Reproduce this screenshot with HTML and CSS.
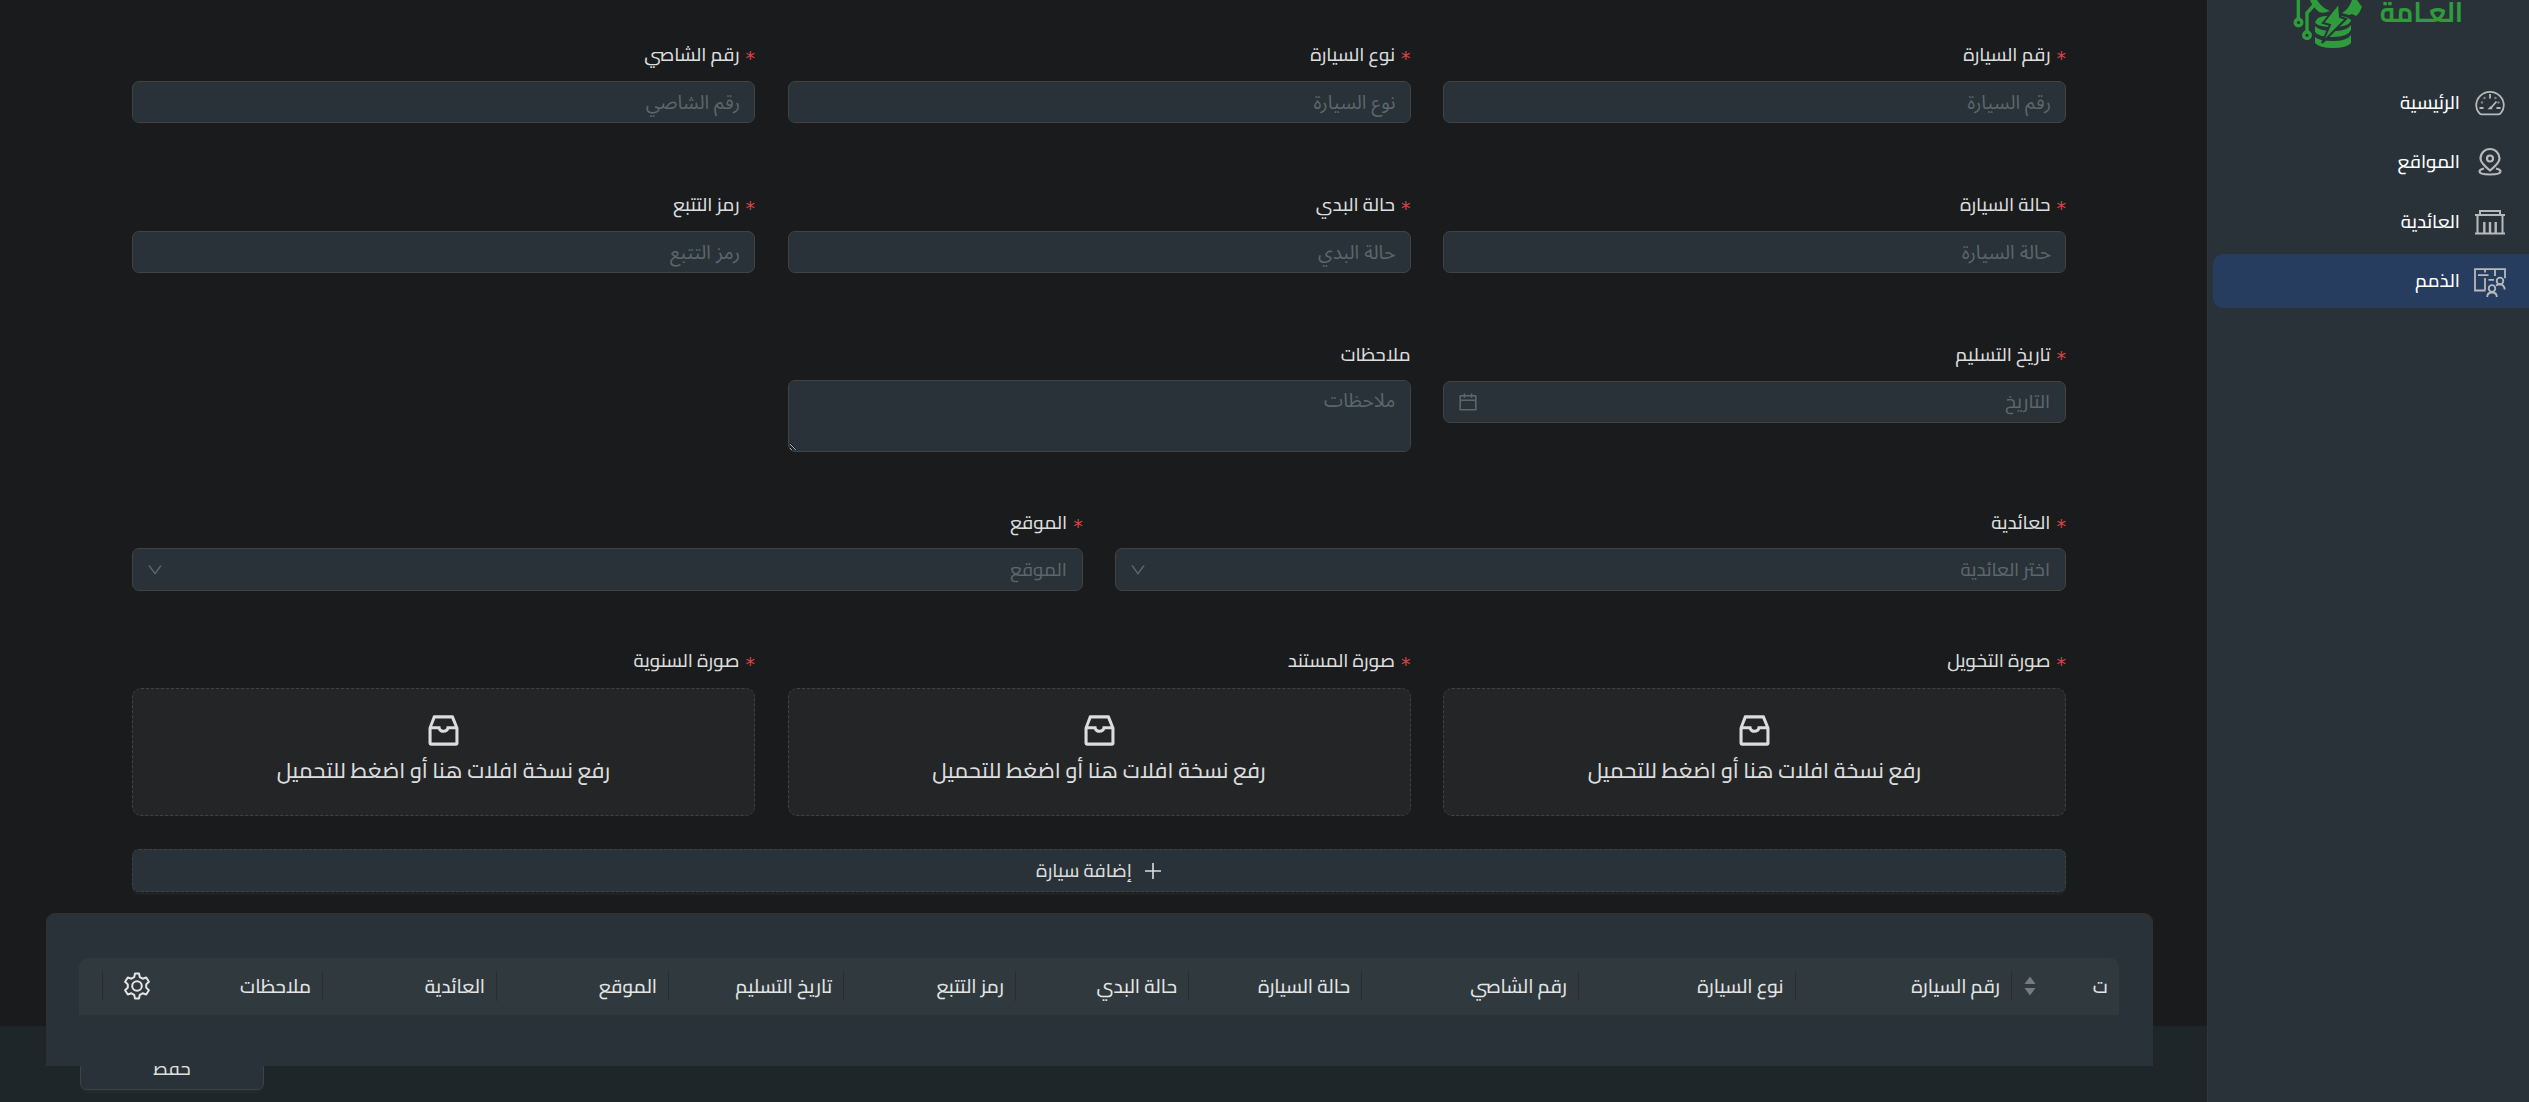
FILE: index.html
```html
<!DOCTYPE html>
<html lang="ar" dir="rtl">
<head>
<meta charset="utf-8">
<title>الذمم</title>
<link rel="stylesheet" href="styles.css">
</head>
<body>
<svg class="defs" aria-hidden="true">
  <symbol id="inbox" viewBox="0 0 1024 1024"><path d="M885.2 446.300l-.2-.8-112.200-285.100c-5-16.100-19.900-27.200-36.800-27.200H281.200c-17 0-32.100 11.300-36.900 27.600L139.400 443l-.3.7-.2.8c-1.300 4.900-1.700 9.900-1 14.800-.1 1.600-.2 3.200-.2 4.800V830a60.900 60.900 0 0 0 60.800 60.800h627.200c33.500 0 60.800-27.300 60.900-60.800V464.100c0-1.300 0-2.600-.1-3.700.4-4.900 0-9.600-1.300-14.100zm-295.800-43l-.3 15.700c-.8 44.900-31.800 75.100-77.100 75.100-22.100 0-41.100-7.100-54.800-20.600S436 441.200 435.600 419l-.3-15.700H229.500L309 210h399.200l81.700 193.300H589.400zm-375 76.800h157.300c24.300 57.100 76 90.800 140.400 90.800 33.700 0 65-9.400 90.300-27.200 22.200-15.600 39.500-37.400 50.700-63.600h156.500V814H214.400V480.100z"/></symbol>
  <symbol id="down" viewBox="0 0 1024 1024"><path d="M884 256h-75c-5.100 0-9.900 2.500-12.900 6.600L512 654.200 227.900 262.600c-3-4.100-7.800-6.600-12.900-6.600h-75c-6.500 0-10.300 7.400-6.500 12.700l352.600 486.100c12.800 17.600 39 17.600 51.700 0l352.600-486.100c3.900-5.300.1-12.700-6.400-12.700z"/></symbol>
</svg>

<aside class="sidebar">
  <div class="logo">
    <span class="logo-text">العـامة</span>
    <svg class="logo-mark" viewBox="0 0 70 48" width="70" height="48">
      <g fill="none" stroke="#2e9b3c" stroke-width="3.400">
        <path d="M5.300 0v18"/><path d="M14 31V13l8-9"/>
        <circle cx="5.500" cy="22.500" r="3.300"/><circle cx="14" cy="35.300" r="3.300"/>
      </g>
      <g fill="#2e9b3c">
        <path d="M17 0h7q5 8 13 11-7 3-11 1Q19 6 17 0z"/>
        <path d="M49 13q7-4 10-13h5l5 7-3 6-3 3-4-2-3 1z"/>
        <path d="M25 18q6-3 15-2 12-1 18 4v1q-3 6-18 6-16 0-18-5z"/>
        <path d="M22 26q4 5 18 5t18-6v5q-3 7-18 7-15 0-18-5z"/>
        <path d="M22 37q4 4 18 4t18-6v8q-4 5-18 5t-18-5z"/>
      </g>
      <path d="M46 3 30 23l7 2-8 18 24-24-6-2z" fill="#2e9b3c" stroke="#283238" stroke-width="2"/>
    </svg>
  </div>
  <nav class="menu">
    <a class="item"><svg viewBox="0 0 32 32" width="32" height="32"><g fill="none" stroke="currentColor" stroke-width="1.800"><path d="M7.500 27.300h17q1.600 0 2.500-1.500 2.800-3.300 2.800-7.200a13.800 13.800 0 0 0-27.600 0q0 3.900 2.800 7.200.9 1.500 2.500 1.500z"/><path d="M16 7v4.500M5.500 21h4M22.500 21h4"/><path d="M22.500 14.500 16.800 21"/></g><path d="M13.500 22.300l3.200-3 1.500 1.200v1.800z" fill="currentColor"/><g fill="currentColor" opacity=".6"><circle cx="8" cy="15.500" r="1.200"/><circle cx="10.500" cy="11" r="1.200"/><circle cx="21.500" cy="11" r="1.200"/><circle cx="24.500" cy="15.500" r="1.200"/></g></svg><span>الرئيسية</span></a>
    <a class="item"><svg viewBox="0 0 32 32" width="32" height="32"><g fill="none" stroke="currentColor" stroke-width="2.200"><path d="M16 24.500Q6.500 17 6.500 12.500a9.500 9.500 0 0 1 19 0q0 4.500-9.500 12z"/><circle cx="16" cy="12.500" r="3"/><path d="M10 22.500q-4.500 1-4.500 3 0 3 10.500 3t10.500-3q0-2-4.500-3"/></g></svg><span>المواقع</span></a>
    <a class="item"><svg viewBox="0 0 32 32" width="32" height="32"><g fill="none" stroke="currentColor" stroke-width="2"><path d="M1 9h30M1 27.500h30M3.500 9v18M28.500 9v18M6 8.500V5h20v3.500"/><path stroke-width="2.400" d="M10.300 16v11M16 16v11M21.700 16v11"/></g></svg><span>العائدية</span></a>
    <a class="item active"><svg viewBox="0 0 32 32" width="32" height="32"><g fill="none" stroke="currentColor" stroke-width="1.800"><path d="M11.500 25.500H1V4.200h30v9M4 10.200h10.500M11 4v3.500M11 13v12M21 4v7M14.500 14.800h5.500"/><circle cx="26" cy="16" r="3.300"/><path d="M22 20.500q4-2.500 7 0 1.500 1.500 1.700 4"/><circle cx="18" cy="23.500" r="3.300"/><path d="M13.200 32q0-4.500 4.800-4.500t4.800 4.500"/></g></svg><span>الذمم</span></a>
  </nav>
</aside>

<main class="page">
  <form class="form">
    <div class="row three">
      <label class="field"><span class="label req">رقم السيارة</span><input class="control" placeholder="رقم السيارة"></label>
      <label class="field"><span class="label req">نوع السيارة</span><input class="control" placeholder="نوع السيارة"></label>
      <label class="field"><span class="label req">رقم الشاصي</span><input class="control" placeholder="رقم الشاصي"></label>
    </div>
    <div class="row three">
      <label class="field"><span class="label req">حالة السيارة</span><input class="control" placeholder="حالة السيارة"></label>
      <label class="field"><span class="label req">حالة البدي</span><input class="control" placeholder="حالة البدي"></label>
      <label class="field"><span class="label req">رمز التتبع</span><input class="control" placeholder="رمز التتبع"></label>
    </div>
    <div class="row three notes-row">
      <div class="field"><span class="label req">تاريخ التسليم</span><div class="control picker"><span>التاريخ</span><svg viewBox="0 0 1024 1024" width="22" height="22"><path fill="currentColor" d="M880 184H712v-64c0-4.400-3.600-8-8-8h-56c-4.400 0-8 3.600-8 8v64H384v-64c0-4.400-3.600-8-8-8h-56c-4.400 0-8 3.600-8 8v64H144c-17.700 0-32 14.300-32 32v664c0 17.700 14.300 32 32 32h736c17.700 0 32-14.300 32-32V216c0-17.700-14.300-32-32-32zm-40 656H184V460h656v380zM184 392V256h128v48c0 4.400 3.600 8 8 8h56c4.400 0 8-3.600 8-8v-48h256v48c0 4.400 3.600 8 8 8h56c4.400 0 8-3.600 8-8v-48h128v136H184z"/></svg></div></div>
      <label class="field"><span class="label">ملاحظات</span><textarea class="control notes" placeholder="ملاحظات"></textarea></label>
    </div>
    <div class="row two">
      <div class="field"><span class="label req">العائدية</span><div class="control select"><span>اختر العائدية</span><svg width="18" height="18"><use href="#down"/></svg></div></div>
      <div class="field"><span class="label req">الموقع</span><div class="control select"><span>الموقع</span><svg width="18" height="18"><use href="#down"/></svg></div></div>
    </div>
    <div class="row three uploads">
      <div class="field"><span class="label req">صورة التخويل</span><div class="drop"><svg width="41" height="41"><use href="#inbox"/></svg><p>رفع نسخة افلات هنا أو اضغط للتحميل</p></div></div>
      <div class="field"><span class="label req">صورة المستند</span><div class="drop"><svg width="41" height="41"><use href="#inbox"/></svg><p>رفع نسخة افلات هنا أو اضغط للتحميل</p></div></div>
      <div class="field"><span class="label req">صورة السنوية</span><div class="drop"><svg width="41" height="41"><use href="#inbox"/></svg><p>رفع نسخة افلات هنا أو اضغط للتحميل</p></div></div>
    </div>
    <button type="button" class="add"><svg viewBox="0 0 18 18" width="18" height="18"><path d="M9 1v16M1 9h16" stroke="currentColor" stroke-width="1.600"/></svg><span>إضافة سيارة</span></button>
  </form>

  <section class="card">
    <div class="thead">
      <div class="th first"><span>ت</span><svg viewBox="0 0 12 20" width="12" height="20"><path fill="currentColor" d="M6 .5 11.500 8H.5zM6 19.500 11.500 12H.5z"/></svg></div>
      <div class="th">رقم السيارة</div>
      <div class="th">نوع السيارة</div>
      <div class="th">رقم الشاصي</div>
      <div class="th">حالة السيارة</div>
      <div class="th">حالة البدي</div>
      <div class="th">رمز التتبع</div>
      <div class="th">تاريخ التسليم</div>
      <div class="th">الموقع</div>
      <div class="th">العائدية</div>
      <div class="th">ملاحظات</div>
      <div class="th gear"><svg viewBox="0 0 28 28" width="28" height="28"><g fill="none" stroke="currentColor" stroke-width="2" stroke-linejoin="round"><path d="M12 1.500h4l.8 3.600 2.800 1.600 3.600-1.200 2.700 4.200-2.700 2.700v3.200l2.700 2.700-2.700 4.200-3.600-1.200-2.800 1.600-.8 3.600h-4l-.8-3.600-2.800-1.600-3.600 1.200-2.700-4.200 2.700-2.700v-3.200L2.100 9.700l2.700-4.200 3.600 1.200 2.800-1.600z"/><circle cx="14" cy="14" r="4.800"/></g></svg></div>
      <div class="th"></div>
    </div>
  </section>

  <footer class="footer"><button type="button" class="save">حفظ</button></footer>
</main>
</body>
</html>
```
FILE: styles.css
```css
* { box-sizing: border-box; }
body {
  margin: 0;
  height: 1102px;
  overflow: hidden;
  display: flex;
  background: #1a1b1d;
  color: #dcdddd;
  font: 500 18.700px/32px Cairo, "DejaVu Sans", sans-serif;
}
.defs { position: absolute; width: 0; height: 0; }
p { margin: 0; }
button { font: inherit; color: inherit; }

.sidebar {
  width: 322px;
  flex: none;
  background: #283238;
  border-left: 1px solid #303639;
}
.logo {
  height: 76px;
  padding-right: 66px;
  display: flex;
  align-items: flex-start;
  gap: 20px;
}
.logo-text {
  width: 80px;
  font-size: 28px;
  font-weight: 700;
  line-height: 24px;
  color: #2e9b3c;
  white-space: nowrap;
  transform: scaleX(.94);
  transform-origin: right;
}
.menu { display: flex; flex-direction: column; gap: 5.400px; }
.item {
  height: 54px;
  margin-left: 5px;
  padding-right: 23px;
  display: flex;
  align-items: center;
  gap: 14px;
  color: #fff;
}
.item svg { color: #b7b9ba; }
.item.active { background: #263d5f; border-radius: 10px 0 0 10px; }

.page { flex: 1; min-width: 0; display: flex; flex-direction: column; }
.form { padding: 39px 141px 0 132px; }
.row { display: grid; column-gap: 32.500px; align-items: start; margin-bottom: 66px; }
.three { grid-template-columns: repeat(3, 1fr); }
.two { grid-template-columns: repeat(2, 1fr); margin-bottom: 54px; }
.notes-row { margin-bottom: 55px; }
.field { display: flex; flex-direction: column; gap: 10px; }
.two .field { gap: 9px; }
.label { height: 32px; }
.req::before {
  content: "*";
  display: inline-block;
  height: 20px;
  margin-left: 6px;
  color: #dc4446;
  font: 400 19px/20px "DejaVu Sans", sans-serif;
  vertical-align: -4px;
}
.control {
  width: 100%;
  height: 42px;
  margin: 0;
  padding: 0 14px;
  border: 1px solid #424242;
  border-radius: 7px;
  background: #283238;
  color: #dcdddd;
  font: 400 19.300px/28px "Noto Sans Arabic", sans-serif;
  outline: none;
}
.control::placeholder { color: #5d666a; opacity: 1; }
.notes { height: 72px; margin-top: -1px; padding-top: 6px; resize: vertical; }
.picker, .select {
  display: flex;
  align-items: center;
  justify-content: space-between;
  padding: 0 15px 0 13px;
  color: #5d666a;
  font: 500 18.500px/32px Cairo, sans-serif;
}
.select { height: 43px; fill: currentColor; }

.uploads { margin-bottom: 33px; }
.uploads .field { gap: 11px; }
.drop {
  height: 128px;
  border: 1px dashed #424242;
  border-radius: 9px;
  background: #232527;
  display: flex;
  flex-direction: column;
  align-items: center;
  gap: 3px;
  padding-top: 21px;
  fill: #dcdddd;
  font-size: 21.500px;
}
.add {
  width: 100%;
  height: 43px;
  display: flex;
  align-items: center;
  justify-content: center;
  gap: 12px;
  border: 1px dashed #424242;
  border-radius: 7px;
  background: #283238;
  box-shadow: 0 3px 0 #202224;
  padding: 0;
}

.card {
  position: relative;
  height: 153px;
  margin: 21px 54px 0 46px;
  padding: 44px 33px 0 32px;
  border: 1px solid #303030;
  border-bottom: 0;
  border-radius: 9px 9px 0 0;
  background: #283238;
}
.thead {
  height: 57px;
  display: grid;
  grid-template-columns: 107px 216.500px 216.500px 217px 173px 173px 172px 175px 172px 174px 150px 1fr 24px;
  align-items: center;
  border-bottom: 1px solid #3a3532;
  border-radius: 9px 9px 0 0;
  background: #30393e;
  font-size: 19px;
}
.th {
  height: 30px;
  padding-right: 11px;
  border-right: 1px solid #292d2f;
  display: flex;
  align-items: center;
  color: #e4e5e5;
}
.first { border: 0; padding-left: 12px; justify-content: space-between; }
.first svg { color: #767c7f; }
.gear { border: 0; padding: 0 0 0 20px; justify-content: flex-end; }

.footer {
  height: 76px;
  margin-top: -40px;
  padding: 22px 0 0 80px;
  display: flex;
  justify-content: flex-end;
  background: #1f262a;
}
.save {
  width: 184px;
  height: 42px;
  border: 1px solid #424242;
  border-radius: 7px;
  background: #283238;
  box-shadow: 0 3px 0 #24292c;
  padding: 0;
}
```
